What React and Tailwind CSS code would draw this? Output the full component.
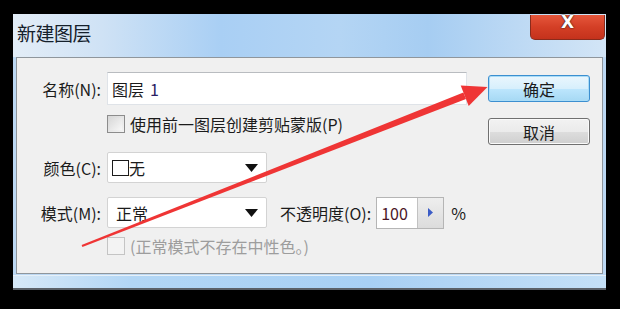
export default function App() {
  return (
    <div className="relative w-[620px] h-[309px] bg-black overflow-hidden pt-[14px] pl-[13px] font-['Noto_Sans_CJK_SC','Noto_Sans',sans-serif] text-[#1b1b1b]">
      <div className="w-[593px] h-[276px] flex flex-col bg-[#bcd8f3] border-b-2 border-[#5b6168]">
        {/* title bar */}
        <div className="h-[43px] flex justify-between items-start pl-[4px] pr-[1px] bg-[linear-gradient(90deg,#e3edf7_0%,#cfe2f5_15%,#a9cff4_35%,#b4d5f4_55%,#a6cdf2_70%,#d3e5f6_100%)]">
          <span className="mt-[7px] text-[19px] leading-[24px] text-[#15202b] tracking-[-0.5px]">新建图层</span>
          <div className="mt-[1px] w-[75px] h-[25px] rounded-b-[5px] border border-t-0 border-[#8a2b1c] bg-[linear-gradient(180deg,#e5573c_0%,#d43f26_50%,#c4321c_100%)] flex justify-center items-start">
            <span className="text-white font-['DejaVu_Sans',sans-serif] font-bold text-[17px] leading-[15px] [text-shadow:0_0_2px_#3a1a14,0_0_1px_#3a1a14]">X</span>
          </div>
        </div>
        {/* panel */}
        <div className="mx-[3px] h-[217px] bg-[#f0f0f0] border border-[#8f969c] flex">
          <div className="w-[450px] shrink-0 flex flex-col text-[16px]">
            {/* name row */}
            <div className="mt-[14px] flex items-center h-[33px]">
              <span className="w-[90px] pr-[6px] text-right leading-none">名称(N):</span>
              <div className="w-[360px] h-[33px] bg-white border border-[#dfe3e8] border-t-[#b9bcc0] flex items-center pl-[4px] leading-none">
                图层 <span className="ml-[6px] text-[#2a1d63]">1</span>
              </div>
            </div>
            {/* clipping mask checkbox */}
            <div className="mt-[10px] flex items-center h-[18px]">
              <div className="ml-[90px] w-[18px] h-[18px] border border-[#8c8c8c] bg-[linear-gradient(135deg,#d6d6d6,#f4f4f4)] p-[2px]">
                <div className="w-full h-full bg-[linear-gradient(135deg,#dadada,#f7f7f7)]" />
              </div>
              <span className="ml-[5px] leading-none">使用前一图层创建剪贴蒙版(P)</span>
            </div>
            {/* color row */}
            <div className="mt-[19px] flex items-center h-[31px]">
              <span className="w-[90px] pr-[6px] text-right leading-none">颜色(C):</span>
              <div className="w-[160px] h-[31px] bg-white border border-[#d3d3d3] rounded-[2px] flex items-center pl-[4px] pr-[8px]">
                <div className="w-[17px] h-[16px] border-[1.5px] border-[#1b1b1b] bg-white" />
                <span className="leading-none">无</span>
                <svg className="ml-auto" width="13" height="8" viewBox="0 0 13 8"><path d="M0 0H13L6.5 8Z" fill="#111" /></svg>
              </div>
            </div>
            {/* mode row */}
            <div className="mt-[14px] flex items-center h-[31px]">
              <span className="w-[90px] pr-[6px] text-right leading-none">模式(M):</span>
              <div className="w-[160px] h-[31px] bg-white border border-[#d3d3d3] rounded-[2px] flex items-center pl-[8px] pr-[8px]">
                <span className="leading-none">正常</span>
                <svg className="ml-auto" width="13" height="8" viewBox="0 0 13 8"><path d="M0 0H13L6.5 8Z" fill="#111" /></svg>
              </div>
              <span className="ml-[13px] leading-none whitespace-nowrap">不透明度(O):</span>
              <div className="ml-[5px] h-[32px] w-[68px] shrink-0 flex border border-[#b5b5b5]">
                <div className="w-[40px] bg-white flex items-center pl-[4px] leading-none text-[#4a1626]">100</div>
                <div className="flex-1 border-l border-[#c2c2c2] bg-[linear-gradient(180deg,#eeeeee,#dcdcdc)] flex items-center justify-center">
                  <svg width="5" height="9" viewBox="0 0 5 9"><path d="M0 0L5 4.5L0 9Z" fill="#3b5cc6" /></svg>
                </div>
              </div>
              <span className="ml-[7px] leading-none">%</span>
            </div>
            {/* disabled checkbox */}
            <div className="mt-[9px] flex items-center h-[18px]">
              <div className="ml-[90px] w-[18px] h-[18px] border border-[#c4c4c4] bg-[#f3f3f3]" />
              <span className="ml-[5px] leading-none text-[#9d9d9d]">(正常模式不存在中性色。)</span>
            </div>
          </div>
          {/* buttons */}
          <div className="ml-[21px] mt-[17px] flex flex-col gap-[16px] text-[16px]">
            <div className="w-[102px] h-[27px] rounded-[3px] border border-[#3c8fd0] shadow-[inset_0_0_0_1px_#a9dcf7] bg-[linear-gradient(180deg,#eaf6fd_0%,#d7effc_50%,#bde6fd_51%,#a6d9f4_100%)] flex items-center justify-center leading-none">确定</div>
            <div className="w-[102px] h-[27px] rounded-[3px] border border-[#707070] shadow-[inset_0_0_0_1px_#fafafa] bg-[linear-gradient(180deg,#f2f2f2_0%,#ebebeb_50%,#dddddd_51%,#cfcfcf_100%)] flex items-center justify-center leading-none">取消</div>
          </div>
        </div>
        {/* bottom frame */}
        <div className="flex-1 mt-[1px] bg-[linear-gradient(90deg,#d6e8f7_0%,#b2d6f5_20%,#a8d0f4_60%,#c4e0f7_100%)] border-t border-[#e6f0f8]" />
      </div>
      {/* red annotation arrow */}
      <svg className="absolute left-0 top-0 pointer-events-none" width="620" height="309" viewBox="0 0 620 309">
        <polygon points="81.6,245.1 82.4,246.9 466,99.1 463.4,92.5" fill="#ef3535" />
        <polygon points="460.7,85.6 487.5,87 468.7,106" fill="#ef3535" />
      </svg>
    </div>
  );
}
